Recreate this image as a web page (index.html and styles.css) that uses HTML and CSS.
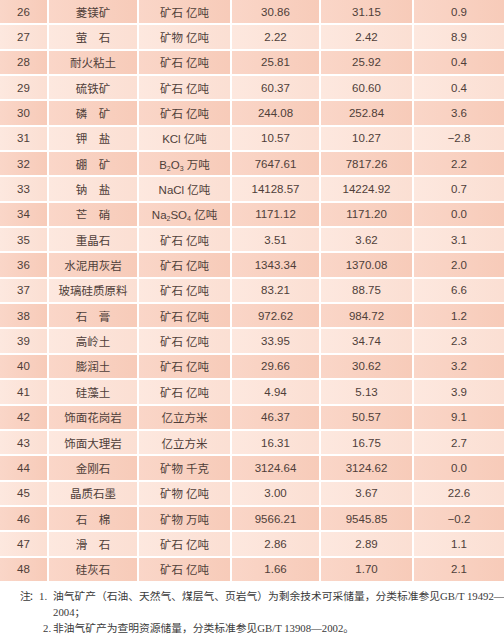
FILE: index.html
```html
<!DOCTYPE html>
<html lang="zh-CN">
<head>
<meta charset="utf-8">
<title>矿产资源储量表</title>
<link rel="stylesheet" href="styles.css">
</head>
<body>
<div class="table">
  <div class="row dark"><div class="c">26</div><div class="c">菱镁矿</div><div class="c">矿石 亿吨</div><div class="c">30.86</div><div class="c">31.15</div><div class="c">0.9</div></div>
  <div class="row light"><div class="c">27</div><div class="c">萤　石</div><div class="c">矿物 亿吨</div><div class="c">2.22</div><div class="c">2.42</div><div class="c">8.9</div></div>
  <div class="row dark"><div class="c">28</div><div class="c">耐火粘土</div><div class="c">矿石 亿吨</div><div class="c">25.81</div><div class="c">25.92</div><div class="c">0.4</div></div>
  <div class="row light"><div class="c">29</div><div class="c">硫铁矿</div><div class="c">矿石 亿吨</div><div class="c">60.37</div><div class="c">60.60</div><div class="c">0.4</div></div>
  <div class="row dark"><div class="c">30</div><div class="c">磷　矿</div><div class="c">矿石 亿吨</div><div class="c">244.08</div><div class="c">252.84</div><div class="c">3.6</div></div>
  <div class="row light"><div class="c">31</div><div class="c">钾　盐</div><div class="c">KCl 亿吨</div><div class="c">10.57</div><div class="c">10.27</div><div class="c">−2.8</div></div>
  <div class="row dark"><div class="c">32</div><div class="c">硼　矿</div><div class="c"><span>B<sub class="sub">2</sub>O<sub class="sub">3</sub> 万吨</span></div><div class="c">7647.61</div><div class="c">7817.26</div><div class="c">2.2</div></div>
  <div class="row light"><div class="c">33</div><div class="c">钠　盐</div><div class="c">NaCl 亿吨</div><div class="c">14128.57</div><div class="c">14224.92</div><div class="c">0.7</div></div>
  <div class="row dark"><div class="c">34</div><div class="c">芒　硝</div><div class="c"><span>Na<sub class="sub">2</sub>SO<sub class="sub">4</sub> 亿吨</span></div><div class="c">1171.12</div><div class="c">1171.20</div><div class="c">0.0</div></div>
  <div class="row light"><div class="c">35</div><div class="c">重晶石</div><div class="c">矿石 亿吨</div><div class="c">3.51</div><div class="c">3.62</div><div class="c">3.1</div></div>
  <div class="row dark"><div class="c">36</div><div class="c">水泥用灰岩</div><div class="c">矿石 亿吨</div><div class="c">1343.34</div><div class="c">1370.08</div><div class="c">2.0</div></div>
  <div class="row light"><div class="c">37</div><div class="c">玻璃硅质原料</div><div class="c">矿石 亿吨</div><div class="c">83.21</div><div class="c">88.75</div><div class="c">6.6</div></div>
  <div class="row dark"><div class="c">38</div><div class="c">石　膏</div><div class="c">矿石 亿吨</div><div class="c">972.62</div><div class="c">984.72</div><div class="c">1.2</div></div>
  <div class="row light"><div class="c">39</div><div class="c">高岭土</div><div class="c">矿石 亿吨</div><div class="c">33.95</div><div class="c">34.74</div><div class="c">2.3</div></div>
  <div class="row dark"><div class="c">40</div><div class="c">膨润土</div><div class="c">矿石 亿吨</div><div class="c">29.66</div><div class="c">30.62</div><div class="c">3.2</div></div>
  <div class="row light"><div class="c">41</div><div class="c">硅藻土</div><div class="c">矿石 亿吨</div><div class="c">4.94</div><div class="c">5.13</div><div class="c">3.9</div></div>
  <div class="row dark"><div class="c">42</div><div class="c">饰面花岗岩</div><div class="c">亿立方米</div><div class="c">46.37</div><div class="c">50.57</div><div class="c">9.1</div></div>
  <div class="row light"><div class="c">43</div><div class="c">饰面大理岩</div><div class="c">亿立方米</div><div class="c">16.31</div><div class="c">16.75</div><div class="c">2.7</div></div>
  <div class="row dark"><div class="c">44</div><div class="c">金刚石</div><div class="c">矿物 千克</div><div class="c">3124.64</div><div class="c">3124.62</div><div class="c">0.0</div></div>
  <div class="row light"><div class="c">45</div><div class="c">晶质石墨</div><div class="c">矿物 亿吨</div><div class="c">3.00</div><div class="c">3.67</div><div class="c">22.6</div></div>
  <div class="row dark"><div class="c">46</div><div class="c">石　棉</div><div class="c">矿物 万吨</div><div class="c">9566.21</div><div class="c">9545.85</div><div class="c">−0.2</div></div>
  <div class="row light"><div class="c">47</div><div class="c">滑　石</div><div class="c">矿石 亿吨</div><div class="c">2.86</div><div class="c">2.89</div><div class="c">1.1</div></div>
  <div class="row dark"><div class="c">48</div><div class="c">硅灰石</div><div class="c">矿石 亿吨</div><div class="c">1.66</div><div class="c">1.70</div><div class="c">2.1</div></div>
</div>
<div class="notes">
  <div class="note">
    <span class="note-label">注：</span>
    <span class="note-num">1.</span>
    <span class="note-text">油气矿产（石油、天然气、煤层气、页岩气）为剩余技术可采储量，分类标准参见GB/T 19492—<br>2004；</span>
  </div>
  <div class="note">
    <span class="note-label"></span>
    <span class="note-num note-num-2">2.</span>
    <span class="note-text">非油气矿产为查明资源储量，分类标准参见GB/T 13908—2002。</span>
  </div>
</div>
</body>
</html>
```
FILE: styles.css
```css
html, body {
  margin: 0;
  padding: 0;
  background: #ffffff;
}
body {
  width: 504px;
  height: 637px;
  overflow: hidden;
}
.table {
  display: flex;
  flex-direction: column;
  gap: 2px;
  height: 581px;
  background: #ffffff;
}
.row {
  flex: 1;
  display: grid;
  grid-template-columns: 47px 88px 91px 87px 91px 90px;
  column-gap: 2px;
}
.c {
  display: flex;
  align-items: center;
  justify-content: center;
  font-family: "Liberation Sans", "Noto Sans CJK SC", sans-serif;
  font-size: 11.5px;
  color: #4f3e39;
  white-space: nowrap;
}
.dark .c {
  background: linear-gradient(to right, #fad6c8, #f7cbb9);
}
.light .c {
  background: linear-gradient(to right, #fde8df, #fbdfd3);
}
.sub {
  font-size: 7px;
  vertical-align: -2px;
  line-height: 0;
}
.notes {
  padding: 7px 0 0 20px;
  font-family: "Liberation Serif", "Noto Sans CJK SC", serif;
  font-size: 10.75px;
  line-height: 16px;
  color: #3a3a3a;
}
.note {
  display: flex;
  white-space: nowrap;
}
.note-label {
  width: 19px;
  flex: none;
  letter-spacing: -2px;
}
.note-num {
  width: 14px;
  flex: none;
}
.note-num-2 {
  padding-left: 4px;
  width: 10px;
}
.note-text {
  flex: none;
}
```
